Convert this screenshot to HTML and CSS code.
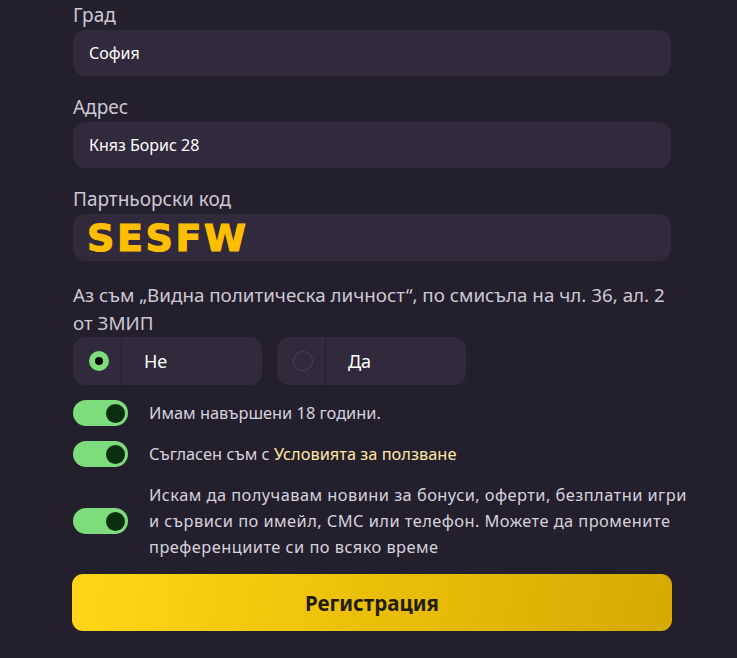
FILE: index.html
```html
<!DOCTYPE html>
<html lang="bg">
<head>
  <meta charset="UTF-8" />
  <meta name="viewport" content="width=device-width, initial-scale=1.0"/>
  <title>Регистрация</title>
  <link rel="stylesheet" href="styles.css">
</head>
<body>
  <form class="register">
    <div class="field">
      <label for="city">Град</label>
      <input id="city" type="text" value="София">
    </div>
    <div class="field">
      <label for="address">Адрес</label>
      <input id="address" type="text" value="Княз Борис 28">
    </div>
    <div class="field">
      <label for="promo">Партньорски код</label>
      <div class="promo-box" id="promo"><span class="promo-code">SESFW</span></div>
    </div>

    <p class="question">Аз съм „Видна политическа личност“, по смисъла на чл. 36, ал. 2 от ЗМИП</p>
    <div class="choices">
      <label class="choice">
        <span class="choice-mark"><span class="radio checked"></span></span>
        <span class="choice-text">Не</span>
      </label>
      <label class="choice">
        <span class="choice-mark"><span class="radio"></span></span>
        <span class="choice-text">Да</span>
      </label>
    </div>

    <div class="consents">
      <div class="consent">
        <span class="toggle on"></span>
        <span class="consent-text">Имам навършени 18 години.</span>
      </div>
      <div class="consent">
        <span class="toggle on"></span>
        <span class="consent-text">Съгласен съм с <a href="#">Условията за ползване</a></span>
      </div>
      <div class="consent">
        <span class="toggle on"></span>
        <span class="consent-text long">Искам да получавам новини за бонуси, оферти, безплатни игри и сървиси по имейл, СМС или телефон. Можете да промените преференциите си по всяко време</span>
      </div>
    </div>

    <button type="button" class="submit">Регистрация</button>
  </form>
</body>
</html>
```

FILE: styles.css
```css
:root {
  --page-bg: #231f2d;
  --field-bg: #31293c;
  --label: #cdc9d4;
  --green: #7ddc7c;
  --knob: #0b2e0f;
}
* {
  margin: 0;
  padding: 0;
  box-sizing: border-box;
}

body {
  font-family: 'Noto Sans', 'Open Sans', sans-serif;
  background-color: var(--page-bg);
  color: var(--label);
}

.register {
  width: 598px;
  margin-left: 73px;
  padding-top: 3px;
}

.field {
  margin-bottom: 19px;
}

.field label {
  display: block;
  font-size: 19px;
  line-height: 24px;
  margin-bottom: 3px;
}

.field input {
  display: block;
  width: 100%;
  height: 46px;
  border: none;
  border-radius: 12px;
  background-color: var(--field-bg);
  color: #fff;
  font-family: inherit;
  font-size: 16px;
  padding: 0 16px;
  outline: none;
}

.promo-box {
  height: 47px;
  border-radius: 12px;
  background-color: var(--field-bg);
  padding-left: 14px;
  display: flex;
  align-items: center;
}

.promo-code {
  font-family: 'DejaVu Sans', sans-serif;
  font-weight: bold;
  font-size: 38px;
  line-height: 1;
  color: #ffbf00;
  -webkit-text-stroke: 1.2px #ffbf00;
  letter-spacing: 2.6px;
}

.question {
  font-size: 18.8px;
  line-height: 28px;
  margin-top: 20px;
}

.choices {
  display: flex;
  gap: 15px;
}

.choice {
  width: 189px;
  height: 48px;
  display: flex;
  border-radius: 12px;
  background-color: var(--field-bg);
  cursor: pointer;
}

.choice-mark {
  width: 49px;
  display: flex;
  align-items: center;
  padding-left: 16px;
  border-right: 1px solid var(--page-bg);
}

.radio {
  width: 20px;
  height: 20px;
  border-radius: 50%;
  border: 1px solid #4a4157;
}

.radio.checked {
  border: 6px solid var(--green);
  background-color: #000;
}

.choice-text {
  display: flex;
  align-items: center;
  padding-left: 22px;
  color: #fff;
  font-size: 18px;
}

.consents {
  margin-top: 15px;
  margin-right: -22px;
  display: flex;
  flex-direction: column;
  gap: 15px;
}

.consent {
  display: flex;
  align-items: center;
  gap: 21px;
}

.toggle {
  flex: none;
  width: 55px;
  height: 26px;
  border-radius: 13px;
  background-color: #4a4157;
  display: flex;
  align-items: center;
  padding: 0 3px;
}

.toggle::after {
  content: '';
  width: 19px;
  height: 19px;
  border-radius: 50%;
  background-color: var(--knob);
}

.toggle.on {
  background-color: var(--green);
  justify-content: flex-end;
}

.consent-text {
  font-size: 16.4px;
  line-height: 26px;
  color: #d6d2dc;
}

.consent-text.long {
  letter-spacing: 0.45px;
}

.consent-text a {
  color: #ffe7a3;
  text-decoration: none;
}

.submit {
  display: block;
  width: 600px;
  height: 57px;
  margin-top: 14px;
  margin-left: -1px;
  border: none;
  border-radius: 11px;
  background: linear-gradient(100deg, #ffd717 0%, #ebbf08 50%, #d5a900 100%);
  color: #231c05;
  font-family: inherit;
  font-size: 20.5px;
  font-weight: bold;
  cursor: pointer;
}
```
